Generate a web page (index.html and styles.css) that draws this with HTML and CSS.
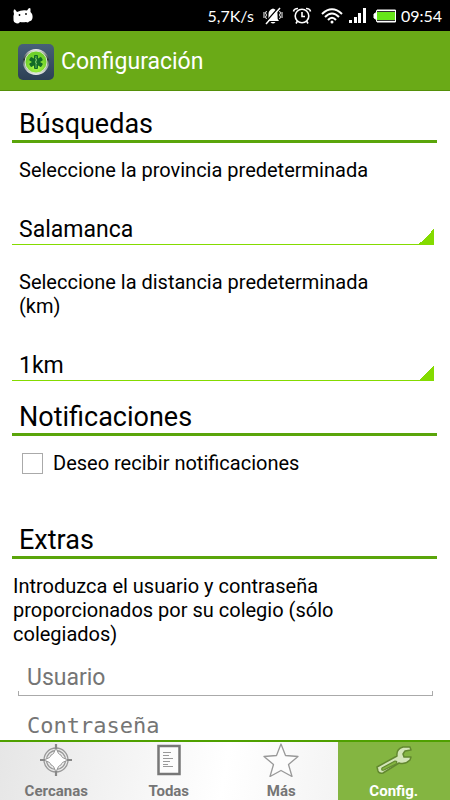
FILE: index.html
```html
<!DOCTYPE html>
<html lang="es">
<head>
  <meta charset="UTF-8">
  <meta name="viewport" content="width=device-width, initial-scale=1">
  <title>Configuración</title>
  <link rel="stylesheet" href="styles.css">
</head>
<body>
  <div class="status-bar">
    <svg class="android" width="20" height="16" viewBox="0 0 20 16">
      <path d="M1 6Q0 3 1 1.500L2 1.500 4 4Q9 1.500 14 2.500L16 0 17.500 .5 17.500 4Q20 6 19.500 10 19 13 16 13.500 15 15 13 14 10 14.500 7 14 6 15.500 4 15.500 0 14.500 0.500 11 0 8 1 6Z" fill="#fff"/>
      <circle cx="6.500" cy="7" r="0.900"/>
      <circle cx="13" cy="6" r="0.900"/>
    </svg>
    <span class="speed">5,7K/s</span>
    <svg class="bell" width="20" height="18" viewBox="0 0 20 18">
      <path d="M4 14Q6 12 5.500 8 5 3 10 1.500 15 3 14.500 8 14 12 16 14Z" fill="#fff"/>
      <path d="M7.500 15H12.500Q10 18 7.500 15Z" fill="#fff"/>
      <path d="M3 15 16 0" stroke="#000" stroke-width="1.500"/>
      <path d="M3 17 17 1" stroke="#fff" stroke-width="1.500"/>
      <path d="M3.500 4 2.500 6 3.500 8 2.500 10 3.500 12M1 5V11M16.500 4 17.500 6 16.500 8 17.500 10 16.500 12M19 5V11" fill="none" stroke="#fff"/>
    </svg>
    <svg class="alarm" width="20" height="18" viewBox="0 0 20 18" fill="none" stroke="#fff" stroke-width="1.600">
      <circle cx="10" cy="9" r="6.800"/>
      <path d="M10 5V9.500H13M5.500 14 4 16.500M14.500 14 16 16.500M1.500 4.500Q2 1.500 6 1.500M18.500 4.500Q18 1.500 14 1.500"/>
    </svg>
    <svg class="wifi" width="22" height="18" viewBox="0 0 22 18" fill="none" stroke="#fff" stroke-width="2">
      <path d="M1 7Q11-2.500 21 7M4 10Q11 3 18 10M7 13Q11 8.500 15 13"/>
      <circle cx="11" cy="15" r="1.500" fill="#fff" stroke="none"/>
    </svg>
    <svg class="signal" width="17" height="15" viewBox="0 0 17 15" fill="#fff">
      <path d="M0 12H3V15H0ZM5 9H8V15H5ZM9 5H12V15H9ZM14 0H17V15H14Z"/>
    </svg>
    <svg class="battery" width="24" height="14" viewBox="0 0 24 14">
      <path d="M4 1H22.500V13H4L3 10 1 9V5L3 4Z" fill="#fff" stroke="#fff"/>
      <rect x="4" y="2" width="18" height="10" fill="#333"/>
      <rect x="4" y="3" width="18" height="8" fill="#66e619"/>
    </svg>
    <span>09:54</span>
  </div>

  <header class="header">
    <svg width="36" height="36" viewBox="0 0 36 36">
      <defs>
        <linearGradient id="tile" x2="0" y2="1">
          <stop offset="0" stop-color="#476078"/>
          <stop offset="1" stop-color="#2c4055"/>
        </linearGradient>
        <linearGradient id="ring" x2="0" y2="1">
          <stop offset="0" stop-color="#f4f4f4"/>
          <stop offset="0.400" stop-color="#26322e"/>
          <stop offset="0.600" stop-color="#8b9696"/>
          <stop offset="1" stop-color="#eee"/>
        </linearGradient>
        <radialGradient id="glow" cy="0.700">
          <stop offset="0" stop-color="#b4ff4a"/>
          <stop offset="1" stop-color="#6fd02a"/>
        </radialGradient>
      </defs>
      <rect width="36" height="36" rx="5" fill="url(#tile)"/>
      <circle cx="18" cy="18" r="13" fill="url(#ring)"/>
      <circle cx="18" cy="18" r="11" fill="url(#glow)" stroke="#d6e7cb"/>
      <g fill="#126b25">
        <rect x="16" y="11" width="4" height="14" rx="1"/>
        <rect x="16" y="11" width="4" height="14" rx="1" transform="rotate(60 18 18)"/>
        <rect x="16" y="11" width="4" height="14" rx="1" transform="rotate(120 18 18)"/>
      </g>
      <path d="M18 12V24M17 14 19 16 17 18 19 20" fill="none" stroke="#7fc66b" stroke-width="0.800"/>
    </svg>
    <h1>Configuración</h1>
  </header>

  <main class="content">
    <h2>Búsquedas</h2>
    <label class="text" for="provincia">Seleccione la provincia predeterminada</label>
    <select id="provincia">
      <option>Salamanca</option>
    </select>
    <label class="text" for="distancia">Seleccione la distancia predeterminada (km)</label>
    <select id="distancia">
      <option>1km</option>
    </select>

    <h2>Notificaciones</h2>
    <div class="check-row">
      <input type="checkbox" id="notificaciones">
      <label for="notificaciones">Deseo recibir notificaciones</label>
    </div>

    <h2>Extras</h2>
    <p class="intro">Introduzca el usuario y contraseña proporcionados por su colegio (sólo colegiados)</p>
    <input class="field" type="text" placeholder="Usuario" aria-label="Usuario">
    <input class="field password" type="password" placeholder="Contraseña" aria-label="Contraseña">
  </main>

  <nav class="tabs">
    <a href="#cercanas">
      <svg width="34" height="34" viewBox="0 0 34 34" fill="none" stroke="#999">
        <circle cx="17" cy="17" r="12" stroke-width="1.300"/>
        <circle cx="17" cy="17" r="9.500" stroke-width="1.300"/>
        <path d="M17 4Q19 12 22 12 22 15 30 17 22 19 22 22 19 22 17 30 15 22 12 22 12 19 4 17 12 15 12 12 15 12 17 4Z" fill="#fff"/>
        <path d="M17 1V6M17 28V33M1 17H6M28 17H33" stroke="#888" stroke-width="2.200"/>
      </svg>
      Cercanas
    </a>
    <a href="#todas">
      <svg width="34" height="34" viewBox="0 0 34 34" fill="none" stroke="#777">
        <rect x="6.500" y="3" width="21" height="28" fill="#fcfcfc" stroke-width="2.500"/>
        <path d="M11 9.500H19M11 12.500H17M11 15.500H21M11 18.500H18M11 21.500H16M11 23.500H21" stroke="#999"/>
      </svg>
      Todas
    </a>
    <a href="#mas">
      <svg width="36" height="34" viewBox="0 0 36 34">
        <path d="M18 1 22.500 12.500 35 13.500 25.500 21.500 29 33.500 18 27.500 7 33.500 10.500 21.500 1 13.500 13.500 12.500Z" fill="#fcfcfc" stroke="#999" stroke-width="1.300" stroke-linejoin="round"/>
      </svg>
      Más
    </a>
    <a class="active" href="#config">
      <svg width="38" height="34" viewBox="0 0 38 34" fill="#d4e5b9" stroke="#62882f" stroke-width="1.500" stroke-linejoin="round">
        <path d="M2 24 22 13Q21 6 28 4L35 4 36 7 30 8 28 11 29 14 36 14 35 17Q30 22 24 20L8 30Q4 31 3 28Z"/>
        <path d="M7 25 20 18Q23 18 21 21L9 27Q6 28 7 25Z" fill="#84b541" stroke-width="1.200"/>
      </svg>
      Config.
    </a>
  </nav>
</body>
</html>
```

FILE: styles.css
```css
* {
  box-sizing: border-box;
}
body {
  margin: 0;
  height: 100vh;
  display: flex;
  flex-direction: column;
  overflow: hidden;
  background: #fff;
  color: #000;
  font-family: Roboto, sans-serif;
}
svg {
  flex: none;
}

/* Barra de estado */
.status-bar {
  flex: none;
  display: flex;
  align-items: center;
  height: 31px;
  padding: 0 8px 0 13px;
  background: #000;
  color: #fff;
  font: 16px Lato, sans-serif;
}
.speed {
  margin-left: auto;
}
.bell { margin-left: 9px; }
.alarm { margin-left: 9px; }
.wifi { margin-left: 9px; }
.signal { margin-left: 6px; }
.battery { margin: 0 4px 0 7px; }

.header {
  flex: none;
  display: flex;
  align-items: center;
  gap: 7px;
  height: 60px;
  padding: 2px 0 0 18px;
  background: #6aaa17;
  border-bottom: 1px solid #559009;
  color: #fff;
}
h1 {
  margin: 0;
  font-size: 23px;
  font-weight: 400;
}

/* Contenido */
.content {
  flex: 1;
  min-height: 0;
  overflow: hidden;
  padding: 14px 13px 0 12px;
}
h2 {
  margin: 17px 0 15px;
  padding: 3px 0 0 7px;
  border-bottom: 3px solid #5aa50a;
  font-size: 27px;
  font-weight: 400;
  line-height: 32px;
}
h2:first-child {
  margin-top: 0;
}
.text {
  display: block;
  padding: 0 60px 0 7px;
  font-size: 20px;
  line-height: 24px;
}
select {
  appearance: none;
  display: block;
  width: calc(100% - 3px);
  height: 31px;
  margin: 32px 0 25px;
  padding: 0 20px 0 7px;
  border: 0;
  border-bottom: 1px solid #84db00;
  border-radius: 0;
  background: linear-gradient(135deg, transparent 50%, #84db00 50%) right bottom / 15px 15px no-repeat;
  color: #000;
  font: 23px Roboto, sans-serif;
}
select + h2 {
  margin-top: -8px;
}
.check-row {
  display: flex;
  align-items: center;
  gap: 10px;
  height: 24px;
  margin-bottom: 46px;
  padding-left: 10px;
  font-size: 20px;
}
.check-row input {
  appearance: none;
  width: 21px;
  height: 21px;
  margin: 0;
  border: 1px solid #aaa;
}
.intro {
  margin: 0 90px 14px 1px;
  font-size: 20px;
  line-height: 24px;
}
.field {
  display: block;
  width: calc(100% - 10px);
  height: 36px;
  margin: 0 0 9px 6px;
  padding: 0 9px;
  border: 0;
  border-bottom: 1px solid #aaa;
  border-radius: 0;
  background:
    linear-gradient(#aaa, #aaa) left bottom / 1px 4px no-repeat,
    linear-gradient(#aaa, #aaa) right bottom / 1px 4px no-repeat;
  font: 23px Roboto, sans-serif;
}
.password {
  height: 42px;
  font: 22px "DejaVu Sans Mono", monospace;
}
.field::placeholder {
  color: #757575;
}

/* Pestañas */
.tabs {
  flex: none;
  display: grid;
  grid-template-columns: repeat(4, 1fr);
  height: 60px;
  border-top: 2px solid #4fa000;
  background: linear-gradient(100deg, #e6e6e6, #fff 50%, #f4f4f4 75%);
}
.tabs a {
  display: flex;
  flex-direction: column;
  align-items: center;
  gap: 5px;
  padding-top: 1px;
  color: #757575;
  font-size: 15px;
  font-weight: 700;
  line-height: 18px;
  text-decoration: none;
}
.tabs .active {
  background: #84b541;
  color: #fff;
}
```
